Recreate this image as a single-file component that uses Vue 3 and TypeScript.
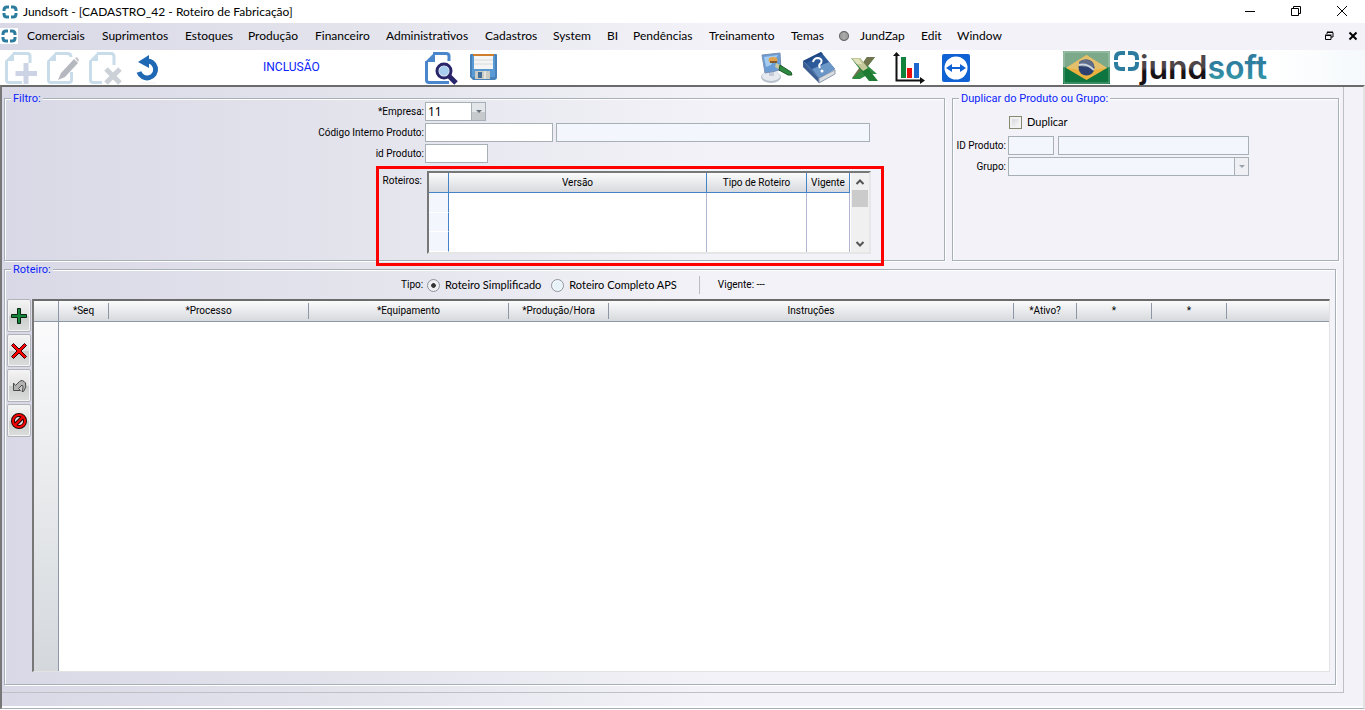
<script setup lang="ts">
import { ref } from 'vue'

interface Column {
  label: string
  cls: string
}

const menus: string[] = [
  'Comerciais', 'Suprimentos', 'Estoques', 'Produção', 'Financeiro', 'Administrativos',
  'Cadastros', 'System', 'BI', 'Pendências', 'Treinamento', 'Temas',
]
const menusEnd: string[] = ['JundZap', 'Edit', 'Window']

const stepColumns: Column[] = [
  { label: '*Seq', cls: 'w-seq' },
  { label: '*Processo', cls: 'w-wide' },
  { label: '*Equipamento', cls: 'w-wide' },
  { label: '*Produção/Hora', cls: 'w-rate' },
  { label: 'Instruções', cls: 'w-auto' },
  { label: '*Ativo?', cls: 'w-active' },
  { label: '*', cls: 'w-star' },
  { label: '*', cls: 'w-star' },
  { label: '', cls: 'w-rest' },
]

const empresa = ref('11')
const codigo = ref('')
const idProduto = ref('')
const duplicar = ref(false)
const tipo = ref('simples')
</script>

<template>
  <div class="window">
    <header class="titlebar">
      <svg class="ring" viewBox="0 0 16 14" aria-hidden="true">
        <path d="M7 2H5Q2 2 2 5V6M2 8V9Q2 12 5 12H7M9 12H11Q14 12 14 9V8M14 6V5Q14 2 11 2H9" />
      </svg>
      <h1>Jundsoft - [CADASTRO_42 - Roteiro de Fabricação]</h1>
      <div class="win-controls">
        <button type="button" aria-label="Minimizar">
          <svg viewBox="0 0 12 12"><path d="M1 6.500H11" /></svg>
        </button>
        <button type="button" aria-label="Restaurar">
          <svg viewBox="0 0 12 12"><path d="M1.500 3.500H8.500V10.500H1.500ZM3.500 3.500V1.500H10.500V8.500H8.500" /></svg>
        </button>
        <button type="button" aria-label="Fechar">
          <svg viewBox="0 0 12 12"><path d="M1 1L11 11M11 1L1 11" /></svg>
        </button>
      </div>
    </header>

    <nav class="menubar">
      <span class="ring-box">
        <svg class="ring" viewBox="0 0 16 14" aria-hidden="true">
          <path d="M7 2H5Q2 2 2 5V6M2 8V9Q2 12 5 12H7M9 12H11Q14 12 14 9V8M14 6V5Q14 2 11 2H9" />
        </svg>
      </span>
      <div class="menus">
        <button v-for="m in menus" :key="m" type="button">{{ m }}</button>
        <svg class="globe" viewBox="0 0 12 12" aria-hidden="true">
          <circle cx="6" cy="6" r="5" fill="#8b8b8b" />
          <path d="M2 4H10M1 6H11M2 8H10M6 1V11" stroke="#b5b5b5" fill="none" />
          <circle cx="6" cy="6" r="4.500" fill="none" stroke="#686868" />
        </svg>
        <button v-for="m in menusEnd" :key="m" type="button">{{ m }}</button>
      </div>
      <div class="child-controls">
        <button type="button" aria-label="Restaurar janela">
          <svg viewBox="0 0 10 10"><path d="M3 3V1.500H9V6H7M3 1H9M1.500 4.500H7V8.500H1.500ZM1 4H7.500" /></svg>
        </button>
        <button type="button" aria-label="Fechar janela">
          <svg class="bold" viewBox="0 0 10 10"><path d="M1.500 1.500L8.500 8.500M8.500 1.500L1.500 8.500" /></svg>
        </button>
      </div>
    </nav>

    <div class="toolbar">
      <div class="tools tools-edit">
        <button type="button" aria-label="Incluir">
          <svg viewBox="0 0 32 32">
            <path d="M8 1.500H22Q25 1.500 25 4V11M1.500 9V28Q1.500 30.500 4 30.500H17" fill="none" stroke="#c9dce9" stroke-width="3" />
            <path d="M0 9L9 0V9Z" fill="#c9dce9" />
            <path d="M21 11V32M10.500 21.500H32" stroke="#ccd3e4" stroke-width="5" />
          </svg>
        </button>
        <button type="button" aria-label="Alterar">
          <svg viewBox="0 0 32 32">
            <path d="M8 1.500H20Q24 1.500 24 5M1.500 9V28Q1.500 30.500 4 30.500H22Q24.500 30.500 24.500 28V20" fill="none" stroke="#c9dce9" stroke-width="3" />
            <path d="M0 9L9 0V9Z" fill="#c9dce9" />
            <path d="M14 21L27 7L31 11L18 25L11 28Z" fill="#b5b8bf" />
            <path d="M28 6L30 5L32 8L31 10Z" fill="#c3c5ca" />
          </svg>
        </button>
        <button type="button" aria-label="Excluir">
          <svg viewBox="0 0 32 32">
            <path d="M8 1.500H22Q25 1.500 25 5V13M1.500 9V28Q1.500 30.500 4 30.500H13" fill="none" stroke="#c9dce9" stroke-width="3" />
            <path d="M0 9L9 0V9Z" fill="#c9dce9" />
            <path d="M17 17L31 31M31 17L17 31" stroke="#ccd1d7" stroke-width="5" />
          </svg>
        </button>
        <button type="button" aria-label="Desfazer">
          <svg viewBox="0 0 32 32">
            <path d="M8 20A8.500 8.500 0 1 0 15 9" fill="none" stroke="#1f68b4" stroke-width="5" />
            <path d="M7 10L18 3V16Z" fill="#1f68b4" />
            <path d="M9 31H25" stroke="#f0f0f0" />
          </svg>
        </button>
      </div>
      <span class="mode">INCLUSÃO</span>
      <div class="tools tools-file">
        <button type="button" aria-label="Pesquisar">
          <svg viewBox="0 0 32 32">
            <path d="M8 1.500H21Q24 1.500 24 4V9M1.500 9V28Q1.500 30.500 4 30.500H24" fill="none" stroke="#4a86cb" stroke-width="3" />
            <path d="M0 10L10 0V10Z" fill="#4a86cb" />
            <path d="M24 24L31 31" stroke="#28256b" stroke-width="5" />
            <circle cx="19" cy="19" r="7" fill="#fff" stroke="#28256b" stroke-width="3" />
            <circle cx="19" cy="19" r="5" fill="#a9cdef" />
          </svg>
        </button>
        <button type="button" aria-label="Salvar">
          <svg viewBox="0 0 32 32">
            <path d="M4 2H29Q30 2 30 3V25Q30 28 27 28H6L3 25V3Q3 2 4 2Z" fill="#4781b9" />
            <path d="M5 4V25H28V4" fill="#5a9ad4" />
            <path d="M7 2H26V17H7Z" fill="#f5f5f5" />
            <path d="M6 2H27V4H6Z" fill="#cf7e2e" />
            <path d="M7 8H26M7 12H26" stroke="#d7dadb" />
            <path d="M8 19H23V27H8Z" fill="#cbcbc3" />
            <path d="M11 20H15V26H11Z" fill="#416f99" />
            <path d="M17 19H19V27H17Z" fill="#e5e5df" />
          </svg>
        </button>
      </div>
      <div class="tools tools-extra">
        <button type="button" aria-label="Temas">
          <svg viewBox="0 0 32 32">
            <ellipse cx="10" cy="25" rx="10" ry="6" fill="#b8c0cc" />
            <ellipse cx="10" cy="24" rx="9" ry="5" fill="#e6eaf0" />
            <path d="M8 18H13V24H8Z" fill="#c4cbd8" />
            <path d="M1 3L19 1L20 18L4 21Z" fill="#6a9dd6" stroke="#7c90b4" />
            <path d="M3 5L17 3L10 13L5 15Z" fill="#a5cbef" />
            <ellipse cx="12" cy="8" rx="4.500" ry="3" fill="#e3a24c" />
            <path d="M9 10H16" stroke="#805b2e" stroke-width="2" />
            <path d="M15 11L21 14L19 18L14 15Z" fill="#c9c6a0" />
            <path d="M19 13L30 20L31 23L27 23L18 18Z" fill="#2d8840" stroke="#1b5d2a" />
          </svg>
        </button>
        <button type="button" aria-label="Ajuda">
          <svg viewBox="0 0 32 32">
            <path d="M-2 9L14 26V31L-2 15Z" fill="#3b5f93" />
            <path d="M14 26L30 18V22L14 31Z" fill="#d9dce0" stroke="#8e9cb0" />
            <path d="M-2 9L16 0L30 17L14 26Z" fill="#2d5a99" />
            <path d="M7 17L24 10L30 17L14 26Z" fill="#6b96c8" />
            <path d="M-2 9L16 0L18 2L1 11Z" fill="#214a87" />
            <path d="M8 10Q9 6 13 6Q18 7 16 11Q13 13 15 16" fill="none" stroke="#fff" stroke-width="2" />
            <circle cx="17" cy="19" r="1.500" fill="#fff" />
          </svg>
        </button>
        <button type="button" aria-label="Exportar para Excel">
          <svg viewBox="0 0 32 32">
            <path d="M18 5H26L19 14L28 22H20L11 27H3L11 16Z" fill="#2e8c41" />
            <path d="M18 5H26L9 26H3Z" fill="#70734c" />
            <path d="M2 6H11L29 29H20Z" fill="#1d7b32" />
            <path d="M2 6H11L19 16L14 19Z" fill="#c5c89a" />
            <path d="M4 7H10L13 12H8Z" fill="#e0e2bd" />
            <path d="M6 24L11 19L14 21L9 26H4Z" fill="#2e8c41" />
          </svg>
        </button>
        <button type="button" aria-label="Gráficos">
          <svg viewBox="0 0 32 32">
            <path d="M8 5H13V26H8Z" fill="#12833c" />
            <path d="M14 16H19V26H14Z" fill="#e90f0f" />
            <path d="M21 11H26V26H21Z" fill="#1a67cf" />
            <path d="M3.500 2V28.500H29" fill="none" stroke="#111" stroke-width="2" />
            <path d="M0 4L3.500 0L7 4ZM27 25L32 28.500L27 32Z" fill="#111" />
          </svg>
        </button>
        <button type="button" aria-label="Acesso remoto">
          <svg viewBox="0 0 32 32">
            <rect x="5" y="2" width="28" height="28" rx="2" fill="#0e62d4" />
            <circle cx="19" cy="16" r="11.500" fill="#fff" />
            <path d="M9 16L15 12V15H23V12L29 16L23 20V17H15V20Z" fill="#0e62d4" />
          </svg>
        </button>
      </div>
      <div class="brand">
        <svg class="flag" viewBox="0 0 47 33" role="img" aria-label="Brasil">
          <path d="M0 0H47V33H0Z" fill="#0e7540" />
          <path d="M0 0H47V16Q24 22 0 16Z" fill="#7ba98a" />
          <path d="M23.500 4L44 17L23.500 29L3 17Z" fill="#eab13e" />
          <path d="M23.500 4L44 17Q24 20 3 17Z" fill="#e5c06c" />
          <circle cx="23.500" cy="16.500" r="8" fill="#2c4172" />
          <path d="M16 11Q18 8 23.500 8.500Q30 9 31.500 16Q24 17 16 15Z" fill="#5f6c8a" />
          <path d="M16 14Q24 12 31 19" fill="none" stroke="#cfd5df" stroke-width="2" />
          <path d="M1 1H46V32H1Z" fill="none" stroke="#fff" stroke-opacity=".35" />
        </svg>
        <svg class="logo" viewBox="0 0 160 34" role="img" aria-label="jundsoft">
          <defs>
            <linearGradient id="ink" x1="0" y1="0" x2="0" y2="1">
              <stop offset=".5" stop-color="#4e4549" />
              <stop offset=".6" stop-color="#171216" />
            </linearGradient>
            <linearGradient id="teal" x1="0" y1="0" x2="0" y2="1">
              <stop offset=".5" stop-color="#2f7ea0" />
              <stop offset=".9" stop-color="#37a0a8" />
            </linearGradient>
          </defs>
          <path d="M11 2H7Q2 2 2 7V9M2 11V13Q2 18 7 18H11M14 18H18Q23 18 23 13V11M23 9V7Q23 2 18 2H14" fill="none" stroke="#2b7c9e" stroke-width="4" />
          <text x="26" y="28" fill="url(#ink)">jund<tspan fill="url(#teal)">soft</tspan></text>
        </svg>
      </div>
    </div>

    <main class="workspace">
      <div class="page">
        <div class="top-panels">
          <fieldset class="panel filter">
            <legend>Filtro:</legend>
            <div class="filter-grid">
              <label for="empresa">*Empresa:</label>
              <div class="field">
                <span class="combo combo-short">
                  <select id="empresa" v-model="empresa"><option>11</option></select>
                  <i class="drop"></i>
                </span>
              </div>
              <label for="codigo">Código Interno Produto:</label>
              <div class="field">
                <input id="codigo" v-model="codigo" class="in-code" type="text" />
                <input class="in-desc" type="text" disabled aria-label="Descrição do produto" />
              </div>
              <label for="idprod">id Produto:</label>
              <div class="field">
                <input id="idprod" v-model="idProduto" class="in-id" type="text" />
              </div>
            </div>
            <div class="routes">
              <span id="routes-label" class="routes-label">Roteiros:</span>
              <div class="routes-box">
                <table aria-labelledby="routes-label">
                  <thead>
                    <tr>
                      <th class="c-mark"></th>
                      <th>Versão</th>
                      <th class="c-type">Tipo de Roteiro</th>
                      <th class="c-valid">Vigente</th>
                    </tr>
                  </thead>
                  <tbody>
                    <tr v-for="n in 3" :key="n"><td></td><td></td><td></td><td></td></tr>
                  </tbody>
                </table>
                <div class="scrollbar" aria-hidden="true">
                  <svg viewBox="0 0 16 17"><path d="M4.500 11L8 7.500L11.500 11" /></svg>
                  <i class="thumb"></i>
                  <svg viewBox="0 0 16 17"><path d="M4.500 7L8 10.500L11.500 7" /></svg>
                </div>
              </div>
              <div class="highlight" aria-hidden="true"></div>
            </div>
          </fieldset>

          <fieldset class="panel duplicate">
            <legend>Duplicar do Produto ou Grupo:</legend>
            <label class="check"><input v-model="duplicar" type="checkbox" /><span>Duplicar</span></label>
            <div class="dup-grid">
              <label for="dup-id">ID Produto:</label>
              <div class="field">
                <input id="dup-id" class="in-dup" type="text" disabled />
                <input class="in-grow" type="text" disabled aria-label="Nome do produto" />
              </div>
              <label for="dup-group">Grupo:</label>
              <span class="combo off">
                <select id="dup-group" disabled><option></option></select>
                <i class="drop"></i>
              </span>
            </div>
          </fieldset>
        </div>

        <fieldset class="panel steps">
          <legend>Roteiro:</legend>
          <div class="kind">
            <span class="kind-label">Tipo:</span>
            <label class="radio"><input v-model="tipo" type="radio" name="tipo" value="simples" /><span>Roteiro Simplificado</span></label>
            <label class="radio"><input v-model="tipo" type="radio" name="tipo" value="aps" /><span>Roteiro Completo APS</span></label>
            <i class="bar"></i>
            <span>Vigente: ---</span>
          </div>
          <div class="steps-body">
            <div class="side">
              <button type="button" aria-label="Adicionar linha">
                <svg viewBox="0 0 18 18"><path d="M7.500 1.500H10.500V7.500H16.500V10.500H10.500V16.500H7.500V10.500H1.500V7.500H7.500Z" fill="#14863a" stroke="#0a2412" /></svg>
              </button>
              <button type="button" aria-label="Remover linha">
                <svg viewBox="0 0 18 18">
                  <path d="M3.500 1.500L9 7L14.500 1.500L16.500 3.500L11 9L16.500 14.500L14.500 16.500L9 11L3.500 16.500L1.500 14.500L7 9L1.500 3.500Z" fill="#f00" stroke="#300" />
                </svg>
              </button>
              <button type="button" aria-label="Desfazer alteração">
                <svg viewBox="0 0 18 18">
                  <path d="M3.500 6V13.500H10.500L8.500 11.500L12 8Q14 9 12 14.500H13.500Q17 10 15.500 6Q12.500 2 9.500 4.500L5.500 8.500Z" fill="#b3b3b3" stroke="#4c4c4c" />
                </svg>
              </button>
              <button type="button" aria-label="Cancelar">
                <svg viewBox="0 0 18 18">
                  <circle cx="9" cy="9" r="6" fill="#ddd" stroke="#200" stroke-width="4" />
                  <path d="M5 13L13 5" stroke="#200" stroke-width="4" />
                  <circle cx="9" cy="9" r="6" fill="none" stroke="#f00" stroke-width="2" />
                  <path d="M5 13L13 5" stroke="#f00" stroke-width="2" />
                </svg>
              </button>
            </div>
            <div class="steps-box">
              <table aria-label="Roteiro">
                <thead>
                  <tr>
                    <th class="w-mark"></th>
                    <th v-for="(c, i) in stepColumns" :key="i" :class="c.cls"><span>{{ c.label }}</span></th>
                  </tr>
                </thead>
              </table>
              <div class="steps-rows"></div>
            </div>
          </div>
        </fieldset>
      </div>
    </main>
  </div>
</template>

<style>
body {
  margin: 0;
  background: #fff;
}
</style>

<style scoped>
.window,
.window * {
  box-sizing: border-box;
}

.window {
  display: flex;
  flex-direction: column;
  min-height: 100vh;
  padding-bottom: 1px;
  color: #000;
  font-family: Roboto, "Liberation Sans", sans-serif;
  font-size: 10px;
  line-height: 14px;
}

button,
input,
select {
  margin: 0;
  padding: 0;
  color: inherit;
  font: inherit;
}

button {
  border: 0;
  background: none;
}

svg {
  display: block;
  overflow: visible;
}

.ring {
  width: 16px;
  height: 14px;
  fill: none;
  stroke: #2b7c9e;
  stroke-width: 3;
}

.titlebar {
  display: flex;
  align-items: center;
  height: 23px;
  padding-left: 2px;
  background: #fff;
}

.titlebar h1 {
  flex: 1;
  margin: 0 0 0 5px;
  font: 400 12px/16px Lato, sans-serif;
}

.win-controls {
  display: flex;
}

.win-controls button {
  display: flex;
  justify-content: center;
  width: 46px;
  padding-bottom: 2px;
}

.win-controls svg {
  width: 12px;
  height: 12px;
  fill: none;
  stroke: #000;
}

.menubar {
  display: flex;
  align-items: center;
  height: 27px;
  padding-bottom: 2px;
  background: linear-gradient(90deg, #d9d8e6, #e4e4ed 27%, #f3f2f8 52%);
  font: 400 12px/16px Lato, sans-serif;
}

.ring-box {
  padding: 1px;
  background: #fff;
}

.menus {
  display: grid;
  flex: 1;
  grid-template-columns: 75px 83px 63px 67px 71px 99px 68px 54px 26px 76px 82px 47px 22px 61px 36px 60px;
  align-items: center;
  margin-left: 9px;
}

.menus button {
  text-align: left;
  white-space: nowrap;
}

.globe {
  width: 12px;
  height: 12px;
}

.child-controls {
  display: flex;
  gap: 14px;
  padding-right: 7px;
}

.child-controls svg {
  width: 10px;
  height: 10px;
  fill: none;
  stroke: #000;
}

.child-controls .bold {
  stroke-width: 2;
}

.toolbar {
  display: grid;
  grid-template-columns: 258px 162px 336px 302px 1fr;
  align-items: center;
  height: 35px;
  padding-left: 5px;
  background: linear-gradient(90deg, #fff 93%, #f5f9fc);
}

.tools {
  display: flex;
  gap: 10px;
}

.tools svg {
  width: 32px;
  height: 32px;
}

.tools-extra button {
  width: 34px;
}

.mode {
  padding-bottom: 2px;
  color: #0b24fb;
  font-size: 12px;
}

.brand {
  display: flex;
  gap: 4px;
}

.flag {
  width: 47px;
  height: 33px;
}

.logo {
  width: 160px;
  height: 34px;
}

.logo text {
  font: 600 32px "Inter", sans-serif;
}

.workspace {
  display: flex;
  flex: 1;
  padding: 0 19px 15px 0;
  border-top: 2px solid #6b6b6b;
  border-right: 2px solid #e3e3e3;
  border-bottom: 1px solid #a9adb5;
  border-left: 2px solid #777;
  background: linear-gradient(90deg, #d9d8e6, #e4e4ed 27%, #f3f2f8 52%);
  box-shadow: inset 0 -2px #fff;
}

.page {
  display: flex;
  flex: 1;
  flex-direction: column;
  gap: 4px;
  min-width: 0;
  padding: 7px 4px 7px 2px;
  border-right: 1px solid #bfbfc6;
  border-bottom: 1px solid #bfbfc6;
}

.panel {
  min-width: 0;
  margin: 0;
  padding: 0;
  border: 1px solid #a7afb7;
  box-shadow: 1px 1px #fff, inset 1px 1px #fff;
}

.panel legend {
  height: 8px;
  margin-left: 6px;
  padding: 0 2px;
  background: #dbdae7;
  color: #0b24fb;
  font-size: 11px;
  line-height: 10px;
}

.duplicate legend {
  background: #f3f2f8;
}

.top-panels {
  display: grid;
  grid-template-columns: 941fr 387fr;
  gap: 7px;
}

.filter-grid {
  display: grid;
  grid-template-columns: 419px 1fr;
  row-gap: 2px;
  column-gap: 1px;
  align-items: center;
}

.filter-grid label,
.dup-grid label {
  text-align: right;
  white-space: nowrap;
}

.field {
  display: flex;
  gap: 3px;
}

input[type="text"] {
  height: 19px;
  padding: 0 3px;
  border: 1px solid #a7afb7;
  background: #fff;
}

input[type="text"]:disabled {
  background: #f3f7fd;
}

.in-code {
  width: 128px;
}

.in-desc {
  width: 314px;
}

.in-id {
  width: 63px;
}

.combo {
  display: flex;
  height: 19px;
  border: 1px solid #a7afb7;
  background: #fff;
}

.combo-short {
  width: 61px;
}

.combo select {
  flex: 1;
  min-width: 0;
  padding-left: 2px;
  border: 0;
  appearance: none;
  background: transparent;
  font: 400 12px/16px "Noto Sans", sans-serif;
}

.drop {
  display: flex;
  align-items: center;
  justify-content: center;
  width: 14px;
  border-left: 1px solid #a7afb7;
  background: linear-gradient(#e3e6e8 50%, #c6cacd 50%);
}

.drop::before {
  border: 3px solid transparent;
  border-top-color: #687078;
  border-bottom: 0;
  content: "";
}

.combo.off {
  background: #f3f7fd;
}

.off .drop {
  background: #eef0f4;
}

.off .drop::before {
  border-top-color: #9aa2aa;
}

.routes {
  position: relative;
  display: flex;
  gap: 5px;
  margin: 8px 0 6px;
}

.routes-label {
  width: 417px;
  padding-top: 3px;
  text-align: right;
}

.routes-box {
  display: flex;
  width: 444px;
  height: 83px;
  border: 2px solid #777;
  border-right-color: #e6e6e6;
  border-bottom-color: #e6e6e6;
  background: #fff;
}

.highlight {
  position: absolute;
  top: -5px;
  left: 371px;
  width: 508px;
  height: 100px;
  border: 3px solid #f00;
}

table {
  border-collapse: separate;
  border-spacing: 0;
  table-layout: fixed;
}

th,
td {
  padding: 0;
  font-weight: 400;
}

.routes-box table {
  flex: 1;
  width: 100%;
  margin-right: 1px;
}

.routes-box th {
  height: 20px;
  border-right: 1px solid #4583c8;
  border-bottom: 1px solid #4583c8;
  background: linear-gradient(#fbfbfc, #d6d9dd);
}

.routes-box td {
  height: 19px;
  border-right: 1px solid #b0b6cf;
}

.routes-box td:first-child {
  border-right-color: #4583c8;
  border-bottom: 1px solid #fff;
  background: #f3f7fd;
}

.c-mark {
  width: 20px;
}

.c-type {
  width: 100px;
}

.c-valid {
  width: 43px;
}

.scrollbar {
  display: flex;
  flex-direction: column;
  width: 18px;
  padding: 0 1px;
  background: #f0f0f0;
}

.scrollbar svg {
  width: 16px;
  height: 17px;
  fill: none;
  stroke: #555;
  stroke-width: 2;
}

.scrollbar .thumb {
  height: 17px;
  margin-bottom: auto;
  background: #cbcbcb;
}

.check,
.radio {
  display: flex;
  align-items: center;
  font-family: Lato, sans-serif;
  font-size: 11px;
}

.check {
  gap: 5px;
  margin: 13px 0 7px 56px;
}

.check input {
  width: 13px;
  height: 13px;
  border: 1px solid #858a70;
  appearance: none;
  background: linear-gradient(135deg, #ccd0d6, #fff);
  box-shadow: inset 0 0 0 2px #f2f2f2;
}

.check input:checked {
  background: #4583c8;
}

.dup-grid {
  display: grid;
  grid-template-columns: 53px 241px;
  row-gap: 2px;
  column-gap: 2px;
  align-items: center;
}

.dup-grid .field {
  gap: 4px;
}

.in-dup {
  width: 46px;
}

.in-grow {
  flex: 1;
  min-width: 0;
}

.steps {
  display: flex;
  flex: 1;
  flex-direction: column;
  margin-right: 3px;
}

.kind {
  display: flex;
  align-items: center;
  height: 18px;
  margin: 3px 0 0 396px;
}

.kind-label {
  width: 21px;
}

.radio {
  gap: 5px;
  margin-left: 5px;
}

.radio + .radio {
  margin-left: 10px;
}

.radio input {
  width: 13px;
  height: 13px;
  border: 1px solid #8e959c;
  border-radius: 50%;
  appearance: none;
  background: radial-gradient(#e6f2f8 40%, #fff);
}

.radio input:checked {
  background: radial-gradient(#333 25%, #eef0f2 35%);
}

.bar {
  width: 1px;
  height: 18px;
  margin: 0 18px 0 22px;
  background: #b9bcc5;
}

.steps-body {
  display: flex;
  flex: 1;
  gap: 1px;
  margin: 5px 5px 12px 2px;
}

.side {
  display: flex;
  flex-direction: column;
  gap: 2px;
}

.side button {
  display: flex;
  align-items: center;
  justify-content: center;
  width: 24px;
  height: 33px;
  border: 1px solid #b1b3b9;
  border-radius: 2px;
  background: linear-gradient(#f4f4f4, #e2e2e2 50%, #c9cbcb 51%, #dcdddd);
  box-shadow: inset 0 0 0 1px #f4f4f6;
}

.side svg {
  width: 18px;
  height: 18px;
}

.steps-box {
  display: flex;
  flex: 1;
  flex-direction: column;
  min-width: 0;
  border: 1px solid #e3e3e3;
  border-top: 2px solid #6b6b6b;
  border-left: 2px solid #777;
  background: #fff;
}

.steps-box table {
  width: 100%;
}

.steps-box th {
  height: 21px;
  border-bottom: 1px solid #8e97a6;
  background: linear-gradient(#fbfbfc, #d6d9dd);
}

.steps-box th span {
  display: block;
  height: 16px;
  border-right: 1px solid #8e97a6;
  line-height: 16px;
}

.steps-box .w-rest span {
  border-right: 0;
}

.steps-box .w-mark {
  width: 25px;
  border-right: 1px solid #8e97a6;
}

.w-seq {
  width: 50px;
}

.w-wide {
  width: 200px;
}

.w-rate {
  width: 100px;
}

.w-active {
  width: 63px;
}

.w-star {
  width: 75px;
}

.w-rest {
  width: 102px;
}

.steps-rows {
  flex: 1;
  width: 25px;
  border-right: 1px solid #8e97a6;
  background: linear-gradient(#fbfbfc, #d4d8dc);
}
</style>
